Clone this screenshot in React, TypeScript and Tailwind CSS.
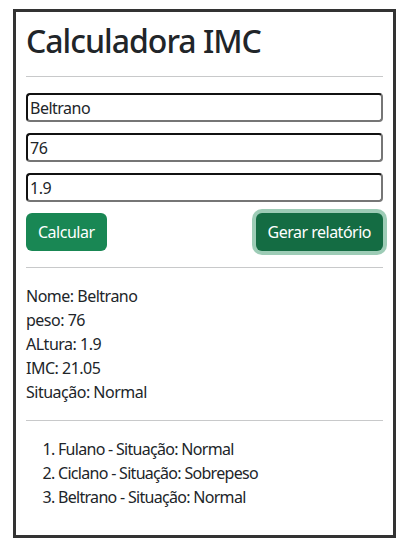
export default function App() {
  const historico = [
    "Fulano - Situação: Normal",
    "Ciclano - Situação: Sobrepeso",
    "Beltrano - Situação: Normal",
  ];

  return (
    <main className="min-h-screen bg-white pt-[9px] pl-[13px] text-[#212529] tracking-[-0.5px] font-['Noto_Sans',sans-serif]">
      <div className="w-[383px] border-[3px] border-[#333] px-[10px] pt-[10px] pb-[10px]">
        {/* Title */}
        <h1 className="text-[32px] leading-[1.2] font-medium tracking-[-1px] m-0">Calculadora IMC</h1>
        <hr className="my-4 border-t border-[#c8c9ca]" />

        {/* Form */}
        <input
          className="block w-full h-[29px] mb-[11px] px-[2px] text-base rounded-[4px] border-2 border-t-[#111] border-l-[#111] border-b-[#767676] border-r-[#767676] outline-none"
          defaultValue="Beltrano"
        />
        <input
          className="block w-full h-[29px] mb-[11px] px-[2px] text-base rounded-[4px] border-2 border-t-[#111] border-l-[#111] border-b-[#767676] border-r-[#767676] outline-none"
          defaultValue="76"
        />
        <input
          className="block w-full h-[29px] mb-[11px] px-[2px] text-base rounded-[4px] border-2 border-t-[#111] border-l-[#111] border-b-[#767676] border-r-[#767676] outline-none"
          defaultValue="1.9"
        />

        <div className="flex justify-between">
          <button className="h-[38px] px-3 rounded-[6px] bg-[#198754] text-white text-base leading-6">
            Calcular
          </button>
          <button className="h-[38px] px-3 rounded-[6px] bg-[#146c43] text-white text-base leading-6 shadow-[0_0_0_4px_rgba(60,153,110,0.5)]">
            Gerar relatório
          </button>
        </div>
        <hr className="my-4 border-t border-[#c8c9ca]" />

        {/* Result */}
        <div className="mb-4 text-base leading-6">
          <p>Nome: Beltrano</p>
          <p>peso: 76</p>
          <p>ALtura: 1.9</p>
          <p>IMC: 21.05</p>
          <p>Situação: Normal</p>
        </div>
        <hr className="my-4 border-t border-[#c8c9ca]" />

        {/* History */}
        <ol className="list-decimal pl-8 mb-4 text-base leading-6 tracking-[-0.7px]">
          {historico.map((item, index) => (
            <li key={index}>{item}</li>
          ))}
        </ol>
      </div>
    </main>
  );
}
